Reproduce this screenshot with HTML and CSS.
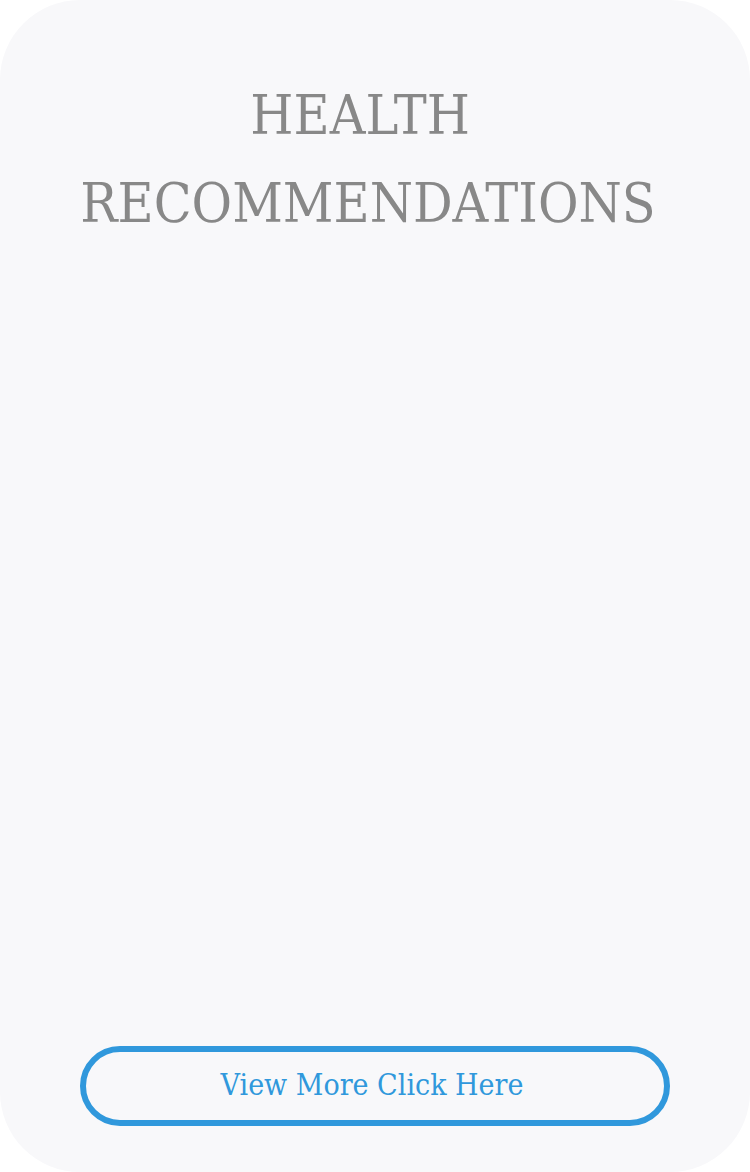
FILE: index.html
```html
<!DOCTYPE html>
<html>
<head>
<meta charset="utf-8">
<link rel="stylesheet" href="styles.css">
</head>
<body>
<div class="card">
  <h1 class="title">HEALTH&nbsp;<br>RECOMMENDATIONS</h1>
  <div class="content"></div>
  <a class="more-btn" href="#">View More Click Here</a>
</div>
</body>
</html>
```

FILE: styles.css
```css
html, body {
  margin: 0;
  padding: 0;
  background: #ffffff;
}
.card {
  width: 750px;
  height: 1172px;
  box-sizing: border-box;
  background: #f8f8fa;
  border-radius: 80px;
  display: flex;
  flex-direction: column;
  padding: 71px 80px 46px 80px;
}
.title {
  margin: 0 14px 0 0;
  font-family: "DejaVu Serif", serif;
  font-stretch: condensed;
  font-weight: normal;
  font-size: 55px;
  line-height: 88px;
  color: #888888;
  text-align: center;
}
.content {
  flex: 1;
}
.more-btn {
  display: flex;
  align-items: center;
  justify-content: center;
  height: 80px;
  box-sizing: border-box;
  border: 6px solid #3098dc;
  border-radius: 40px;
  color: #3098dc;
  font-family: "DejaVu Serif", serif;
  font-stretch: condensed;
  font-size: 30px;
  text-decoration: none;
  padding: 0 6px 3px 0;
}
```
